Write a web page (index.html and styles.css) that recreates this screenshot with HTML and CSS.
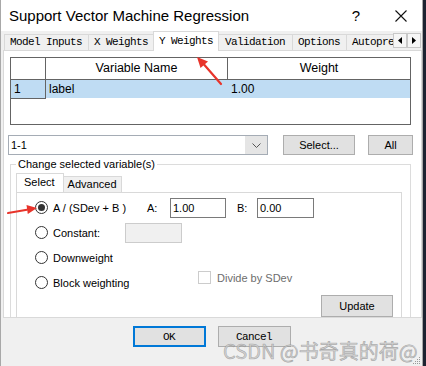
FILE: index.html
```html
<!DOCTYPE html>
<html>
<head>
    <title>Support Vector Machine Regression</title>
    <link rel="stylesheet" href="styles.css">
</head>
<body>
    <div class="window">
        <div class="titlebar">
            <span class="title">Support Vector Machine Regression</span>
            <span class="help">?</span>
            <span class="close">
                <svg width="12" height="12" viewBox="0 0 12 12"><path d="M0.5 0.5L11.5 11.5M11.5 0.5L0.5 11.5" stroke="#111" stroke-width="1.1"/></svg>
            </span>
        </div>

        <div class="content">
            <div class="tabs">
                <div class="tablist">
                    <div class="tab t-model">Model Inputs</div>
                    <div class="tab t-x">X Weights</div>
                    <div class="tab active t-y">Y Weights</div>
                    <div class="tab t-valid">Validation</div>
                    <div class="tab t-opt">Options</div>
                    <div class="tab t-auto">Autopreprocess</div>
                </div>
                <div class="tab-scroll">
                    <span class="scroll-btn"><svg width="4" height="7" viewBox="0 0 4 7"><path d="M4 0L0 3.5L4 7Z" fill="#000"/></svg></span>
                    <span class="scroll-btn"><svg width="4" height="7" viewBox="0 0 4 7"><path d="M0 0L4 3.5L0 7Z" fill="#000"/></svg></span>
                </div>
            </div>

            <div class="panel">
                <div class="grid">
                    <div class="grid-row grid-head">
                        <div class="cell rowhead"></div>
                        <div class="cell head sep">Variable Name</div>
                        <div class="cell head">Weight</div>
                    </div>
                    <div class="grid-row grid-sel">
                        <div class="cell rowhead under">1</div>
                        <div class="cell">label</div>
                        <div class="cell">1.00</div>
                    </div>
                </div>

                <div class="selrow">
                    <div class="combo">
                        <span class="combo-text">1-1</span>
                        <span class="combo-btn">
                            <svg width="9" height="5" viewBox="0 0 9 5"><path d="M0.5 0.5L4.5 4.5L8.5 0.5" fill="none" stroke="#555" stroke-width="1"/></svg>
                        </span>
                    </div>
                    <button class="btn btn-select">Select...</button>
                    <button class="btn btn-all">All</button>
                </div>

                <fieldset class="group">
                    <legend>Change selected variable(s)</legend>
                    <div class="subtabs">
                        <div class="subtab active">Select</div>
                        <div class="subtab">Advanced</div>
                    </div>
                    <div class="pane">
                        <div class="opt-row">
                            <span class="radio checked"></span>
                            <span class="opt-label w-ab">A / (SDev + B )</span>
                            <span class="field-label w-a">A:</span>
                            <span class="input w-in1">1.00</span>
                            <span class="field-label w-b">B:</span>
                            <span class="input w-in2">0.00</span>
                        </div>
                        <div class="opt-row">
                            <span class="radio"></span>
                            <span class="opt-label w-const">Constant:</span>
                            <span class="input disabled w-in2"></span>
                        </div>
                        <div class="opt-row">
                            <span class="radio"></span>
                            <span class="opt-label">Downweight</span>
                        </div>
                        <div class="opt-row">
                            <span class="radio"></span>
                            <span class="opt-label w-block">Block weighting</span>
                            <span class="check-wrap">
                                <span class="checkbox"></span>
                                <span class="check-label">Divide by SDev</span>
                            </span>
                        </div>
                        <div class="update-row">
                            <button class="btn btn-update">Update</button>
                        </div>
                    </div>
                </fieldset>
            </div>
        </div>

        <div class="footer">
            <button class="btn btn-dlg default">OK</button>
            <button class="btn btn-dlg">Cancel</button>
        </div>

        <div class="watermark">CSDN @书奇真的荷@</div>
        <svg class="grip" width="8" height="8" viewBox="0 0 8 8">
            <rect x="6" y="0" width="1" height="1" fill="#999"/>
            <rect x="4" y="2" width="1" height="1" fill="#999"/>
            <rect x="6" y="2" width="1" height="1" fill="#999"/>
            <rect x="2" y="4" width="1" height="1" fill="#999"/>
            <rect x="4" y="4" width="1" height="1" fill="#999"/>
            <rect x="6" y="4" width="1" height="1" fill="#999"/>
            <rect x="0" y="6" width="1" height="1" fill="#999"/>
            <rect x="2" y="6" width="1" height="1" fill="#999"/>
            <rect x="4" y="6" width="1" height="1" fill="#999"/>
            <rect x="6" y="6" width="1" height="1" fill="#999"/>
        </svg>

        <!-- red annotation arrows -->
        <svg class="arrows" width="426" height="366" viewBox="0 0 426 366">
            <path d="M221 84L204 64.5" stroke="#e8342b" stroke-width="2.2" stroke-linecap="round"/>
            <path d="M197 57L208 61.5L200.5 68Z" fill="#e8342b"/>
            <path d="M8 213L27 209.7" stroke="#e8342b" stroke-width="2" stroke-linecap="round"/>
            <path d="M37 208L26.5 205L27.8 214Z" fill="#e8342b"/>
        </svg>
    </div>
</body>
</html>
```

FILE: styles.css
```css
body {
    margin: 0;
    background-color: #1d2331;
    font-family: "Liberation Sans", Arial, sans-serif;
    font-size: 11px;
    color: #000;
}
.window {
    position: relative;
    width: 423px;
    height: 366px;
    box-sizing: border-box;
    border-left: 1px solid #a8a8a8;
    border-right: 1px solid #a8a8a8;
    background-color: #f0f0f0;
    display: flex;
    flex-direction: column;
    overflow: hidden;
}

/* title bar */
.titlebar {
    flex: none;
    height: 31px;
    background-color: #fff;
    display: flex;
    align-items: center;
    padding-left: 8px;
}
.title {
    flex: 1;
    font-size: 15px;
    color: #000;
}
.help {
    width: 14px;
    text-align: center;
    font-size: 15px;
    margin-right: 32px;
}
.close {
    display: flex;
    margin-right: 15px;
}

/* main tabs */
.content {
    flex: none;
    height: 287px;
    padding-left: 2px;
}
.tabs {
    display: flex;
    align-items: flex-end;
    height: 19px;
    padding-left: 1px;
}
.tablist {
    display: flex;
    align-items: flex-end;
    width: 389px;
    overflow: hidden;
    height: 20px;
    margin-bottom: -1px;
}
.tab {
    flex: none;
    box-sizing: border-box;
    height: 17px;
    border: 1px solid #d9d9d9;
    border-right: none;
    border-bottom: 1px solid #d9d9d9;
    background-color: #f0f0f0;
    padding-left: 5px;
    font-family: "Liberation Mono", "Courier New", monospace;
    font-size: 11px;
    letter-spacing: -0.6px;
    line-height: 15px;
    white-space: nowrap;
}
.tab.active {
    height: 20px;
    background-color: #fff;
    border-right: 1px solid #d9d9d9;
    border-bottom: none;
    padding-top: 2px;
}
.t-model { width: 84px; }
.t-x { width: 65px; }
.t-y { width: 66px; }
.t-valid { width: 73px; border-left: none; padding-left: 6px; }
.t-opt { width: 54px; }
.t-auto { width: 60px; }
.tab-scroll {
    display: flex;
    margin-bottom: 2px;
    margin-left: 0;
}
.scroll-btn {
    box-sizing: border-box;
    width: 14px;
    height: 15px;
    border: 1px solid #c8c8c8;
    background-color: #f6f6f6;
    display: flex;
    align-items: center;
    justify-content: center;
}

/* tab page */
.panel {
    box-sizing: border-box;
    width: 419px;
    height: 268px;
    border: 1px solid #d9d9d9;
    background-color: #fff;
    overflow: hidden;
}
.grid {
    box-sizing: border-box;
    width: 401px;
    height: 68px;
    margin: 6px 0 0 6px;
    border: 1px solid #646464;
    font-size: 12px;
}
.grid-row {
    display: grid;
    grid-template-columns: 35px 182px 1fr;
}
.grid-head {
    height: 21px;
    border-bottom: 1px solid #646464;
}
.grid-sel {
    height: 18px;
    background-color: #bfdcf3;
}
.cell {
    padding-left: 3px;
    line-height: 18px;
    white-space: nowrap;
}
.head {
    text-align: center;
    line-height: 21px;
    font-size: 12.5px;
    padding-left: 0;
}
.sep, .rowhead {
    border-right: 1px solid #646464;
}
.under {
    border-bottom: 1px solid #646464;
}
.selrow {
    display: flex;
    align-items: center;
    margin: 10px 0 0 4px;
}
.combo {
    box-sizing: border-box;
    width: 260px;
    height: 20px;
    border: 1px solid #a5acb5;
    display: flex;
}
.combo-text {
    flex: 1;
    line-height: 18px;
    padding-left: 2px;
}
.combo-btn {
    width: 22px;
    background-color: #e5e5e5;
    display: flex;
    align-items: center;
    justify-content: center;
}
.btn {
    box-sizing: border-box;
    border: 1px solid #adadad;
    background-color: #e1e1e1;
    font-family: "Liberation Sans", Arial, sans-serif;
    font-size: 11px;
    color: #000;
    padding: 0;
}
.btn-select {
    width: 72px;
    height: 20px;
    margin-left: 15px;
}
.btn-all {
    width: 45px;
    height: 20px;
    margin-left: 13px;
}

/* group box */
.group {
    box-sizing: border-box;
    width: 401px;
    height: 200px;
    margin: 2px 0 0 6px;
    padding: 2px 8px 0 5px;
    border: 1px solid #dcdcdc;
    min-width: 0;
}
.group legend {
    padding: 0 2px;
    line-height: 14px;
}
.subtabs {
    display: flex;
    align-items: flex-end;
    height: 19px;
}
.subtab {
    box-sizing: border-box;
    height: 16px;
    border: 1px solid #d9d9d9;
    border-bottom: none;
    border-left: none;
    background-color: #f0f0f0;
    padding: 0 4px;
    line-height: 15px;
}
.subtab.active {
    height: 19px;
    border-left: 1px solid #d9d9d9;
    background-color: #fff;
    padding: 0 8px 0 7px;
    line-height: 16px;
}
.pane {
    box-sizing: border-box;
    width: 386px;
    height: 160px;
    border: 1px solid #d9d9d9;
    background-color: #fff;
    padding: 2px 0 0 18px;
}
.opt-row {
    display: flex;
    align-items: center;
    height: 25px;
}
.radio {
    flex: none;
    box-sizing: border-box;
    width: 13px;
    height: 13px;
    border: 1px solid #333;
    border-radius: 50%;
    margin-right: 5px;
    display: flex;
    align-items: center;
    justify-content: center;
}
.radio.checked::after {
    content: "";
    width: 7px;
    height: 7px;
    border-radius: 50%;
    background-color: #333;
}
.opt-label {
    white-space: nowrap;
}
.w-ab { width: 94px; }
.w-const { width: 72px; }
.w-block { width: 145px; }
.field-label { flex: none; }
.w-a { width: 23px; }
.w-b { width: 20px; margin-left: 11px; }
.input {
    box-sizing: border-box;
    height: 20px;
    border: 1px solid #7a7a7a;
    line-height: 18px;
    padding-left: 2px;
}
.w-in1 { width: 56px; }
.w-in2 { width: 57px; }
.input.disabled {
    border-color: #cccccc;
    background-color: #f0f0f0;
}
.check-wrap {
    align-self: flex-start;
    margin-top: 1px;
    display: flex;
    align-items: center;
}
.checkbox {
    box-sizing: border-box;
    width: 13px;
    height: 13px;
    border: 1px solid #cccccc;
    background-color: #fff;
}
.check-label {
    margin-left: 6px;
    color: #6d6d6d;
}
.update-row {
    display: flex;
    justify-content: flex-end;
    padding-right: 8px;
}
.btn-update {
    width: 72px;
    height: 22px;
}

/* dialog buttons */
.footer {
    flex: 1;
    display: flex;
    justify-content: center;
    align-items: flex-start;
    gap: 12px;
    padding-top: 8px;
}
.btn-dlg {
    width: 73px;
    height: 21px;
    font-family: "Liberation Mono", "Courier New", monospace;
    font-size: 11px;
    letter-spacing: -0.6px;
}
.btn-dlg.default {
    border: 2px solid #0078d7;
}

.watermark {
    position: absolute;
    left: 222px;
    top: 336px;
    font-family: "Noto Sans CJK SC", "Noto Sans", sans-serif;
    font-size: 20px;
    color: rgba(205, 205, 205, 0.85);
    -webkit-text-stroke: 0.6px rgba(120, 120, 120, 0.55);
    white-space: nowrap;
}
.grip {
    position: absolute;
    right: 1px;
    bottom: 1px;
}
.arrows {
    position: absolute;
    left: -1px;
    top: 0;
    pointer-events: none;
}
```
